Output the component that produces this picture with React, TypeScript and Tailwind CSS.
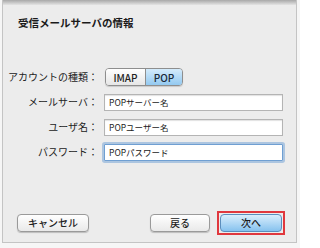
const font = { fontFamily: '"Noto Sans CJK JP", "Liberation Sans", sans-serif' }

type Field = { label: string; value: string; focused?: boolean }

const fields: Field[] = [
  { label: 'メールサーバ：', value: 'POPサーバー名' },
  { label: 'ユーザ名：', value: 'POPユーザー名' },
  { label: 'パスワード：', value: 'POPパスワード', focused: true },
]

function Label({ text }: { text: string }) {
  return (
    <div className="w-[95px] shrink-0 text-right text-[10px] leading-[18px] text-[#222]">
      {text}
    </div>
  )
}

export default function App() {
  return (
    <div className="w-[300px] h-[248px] bg-[#f6f6f6] pl-[2px] pr-[3px] pb-[5px]" style={font}>
      <div className="h-full flex flex-col bg-[#ececec] border-x border-b border-[#c4c4c4]">
        {/* 上の影 */}
        <div className="h-[5px] bg-gradient-to-b from-[#a8a8a8] to-[#e4e4e4]" />

        {/* タイトル */}
        <div className="pl-[15px] pt-[11px] text-[10.5px] leading-[14px] font-bold text-[#1a1a1a]">
          受信メールサーバの情報
        </div>

        {/* フォーム */}
        <div className="mt-[38px] flex flex-col gap-[7px]">
          <div className="flex items-center h-[18px]">
            <Label text="アカウントの種類：" />
            <div className="ml-[7px] flex h-[18px] rounded-[4px] border border-[#8e8e8e] overflow-hidden shadow-[0_1px_1px_rgba(0,0,0,0.15)]">
              <div className="w-[40px] flex items-center justify-center text-[10px] font-medium text-[#222] bg-gradient-to-b from-white to-[#e6e6e6] border-r border-[#8e8e8e]">
                IMAP
              </div>
              <div className="w-[36px] flex items-center justify-center text-[10px] font-medium text-[#1a2a3a] bg-gradient-to-b from-[#d4ebfb] to-[#93c9f0]">
                POP
              </div>
            </div>
          </div>

          {fields.map((f) => (
            <div key={f.label} className="flex items-center h-[18px]">
              <Label text={f.label} />
              <div
                className={
                  f.focused
                    ? 'ml-[6px] w-[179px] h-[17px] bg-white border border-[#6f9fd2] shadow-[0_0_0_2px_rgba(120,165,215,0.55)] rounded-[1px] pl-[4px] text-[8.5px] leading-[15px] text-[#222]'
                    : 'ml-[6px] w-[179px] h-[17px] bg-white border border-[#b4b4b4] shadow-[inset_0_1px_1px_rgba(0,0,0,0.12)] pl-[4px] text-[8.5px] leading-[15px] text-[#222]'
                }
              >
                {f.value}
              </div>
            </div>
          ))}
        </div>

        {/* ボタン */}
        <div className="mt-auto mb-[7px] flex items-center pl-[14px] pr-[11px]">
          <button className="w-[72px] h-[18px] rounded-[4px] border border-[#9a9a9a] bg-gradient-to-b from-white to-[#e9e9e9] shadow-[0_1px_1px_rgba(0,0,0,0.2)] text-[10px] font-medium leading-none text-[#222]">
            キャンセル
          </button>
          <button className="ml-auto w-[60px] h-[18px] rounded-[4px] border border-[#9a9a9a] bg-gradient-to-b from-white to-[#e9e9e9] shadow-[0_1px_1px_rgba(0,0,0,0.2)] text-[10px] font-medium leading-none text-[#222]">
            戻る
          </button>
          <div className="ml-[7px] p-[1px] border-2 border-[#e0383e]">
            <button className="block w-[62px] h-[18px] rounded-[4px] border border-[#5b8ebd] bg-gradient-to-b from-[#d9eefc] to-[#86c2ee] text-[10px] font-medium leading-none text-[#1a1a1a]">
              次へ
            </button>
          </div>
        </div>
      </div>
    </div>
  )
}
